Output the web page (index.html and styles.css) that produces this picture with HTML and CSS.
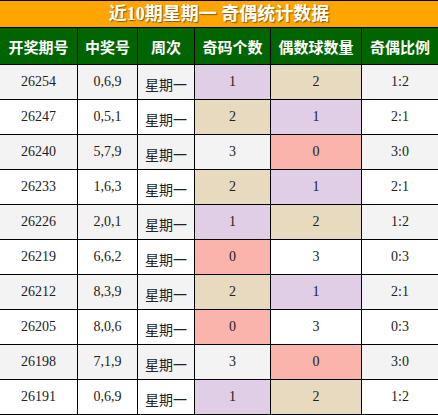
FILE: index.html
```html
<!DOCTYPE html>
<html lang="zh">
<head>
<meta charset="utf-8">
<title>近10期星期一 奇偶统计数据</title>
<link rel="stylesheet" href="styles.css">
</head>
<body>
<table class="stats">
  <colgroup>
    <col class="c1"><col class="c2"><col class="c3"><col class="c4"><col class="c5"><col class="c6">
  </colgroup>
  <thead>
    <tr class="title-row"><th colspan="6" class="title">近10期星期一 奇偶统计数据</th></tr>
    <tr class="head-row">
      <th>开奖期号</th><th>中奖号</th><th>周次</th><th>奇码个数</th><th>偶数球数量</th><th>奇偶比例</th>
    </tr>
  </thead>
  <tbody>
    <tr class="alt"><td>26254</td><td>0,6,9</td><td class="cn">星期一</td><td class="v1">1</td><td class="v2">2</td><td>1:2</td></tr>
    <tr><td>26247</td><td>0,5,1</td><td class="cn">星期一</td><td class="v2">2</td><td class="v1">1</td><td>2:1</td></tr>
    <tr class="alt"><td>26240</td><td>5,7,9</td><td class="cn">星期一</td><td>3</td><td class="v0">0</td><td>3:0</td></tr>
    <tr><td>26233</td><td>1,6,3</td><td class="cn">星期一</td><td class="v2">2</td><td class="v1">1</td><td>2:1</td></tr>
    <tr class="alt"><td>26226</td><td>2,0,1</td><td class="cn">星期一</td><td class="v1">1</td><td class="v2">2</td><td>1:2</td></tr>
    <tr><td>26219</td><td>6,6,2</td><td class="cn">星期一</td><td class="v0">0</td><td>3</td><td>0:3</td></tr>
    <tr class="alt"><td>26212</td><td>8,3,9</td><td class="cn">星期一</td><td class="v2">2</td><td class="v1">1</td><td>2:1</td></tr>
    <tr><td>26205</td><td>8,0,6</td><td class="cn">星期一</td><td class="v0">0</td><td>3</td><td>0:3</td></tr>
    <tr class="alt"><td>26198</td><td>7,1,9</td><td class="cn">星期一</td><td>3</td><td class="v0">0</td><td>3:0</td></tr>
    <tr><td>26191</td><td>0,6,9</td><td class="cn">星期一</td><td class="v1">1</td><td class="v2">2</td><td>1:2</td></tr>
  </tbody>
</table>
</body>
</html>
```
FILE: styles.css
```css
html, body {
  margin: 0;
  padding: 0;
  background: #ffffff;
}

.stats {
  border-collapse: collapse;
  table-layout: fixed;
  width: 439px;
  margin-left: -1px;
  font-family: "Liberation Serif", "Noto Sans CJK SC", serif;
  color: #222;
}

.c1 { width: 78px; }
.c2 { width: 60px; }
.c3 { width: 57px; }
.c4 { width: 76px; }
.c5 { width: 91px; }
.c6 { width: 77px; }

.stats th,
.stats td {
  border: 1px solid #000;
  padding: 0;
  text-align: center;
  vertical-align: middle;
}

.title-row { height: 27px; }

.title {
  background: #ffa500;
  color: #fff;
  font-size: 18px;
  font-weight: bold;
  line-height: 24px;
  text-shadow: 1px 1px 1px rgba(0, 0, 0, 0.45);
}

.head-row { height: 37px; }

.head-row th {
  background: #006400;
  color: #fff;
  font-size: 15px;
  font-weight: bold;
}

tbody tr { height: 35px; }

tbody td {
  font-size: 14px;
  background: #ffffff;
}

tbody tr.alt td { background: #f3f3f3; }

tbody td.cn {
  font-family: "Noto Sans CJK SC", sans-serif;
  padding-top: 3px;
}

tbody tr td.v1 { background: #dfcee6; }
tbody tr td.v2 { background: #e7dabe; }
tbody tr td.v0 { background: #fab4ab; }
```
